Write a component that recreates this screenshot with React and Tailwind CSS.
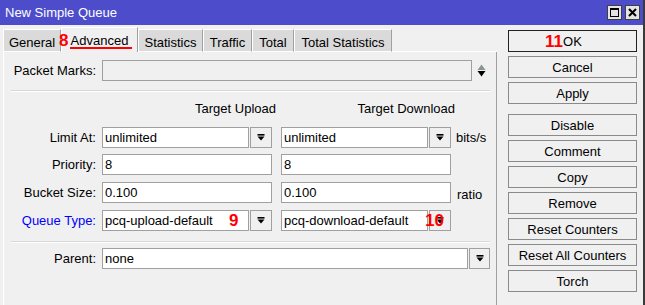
import React from 'react'

const tabs = [
  ['General', 58],
  ['Advanced', 77, true],
  ['Statistics', 65],
  ['Traffic', 49],
  ['Total', 42],
  ['Total Statistics', 98],
]

const buttons = [
  ['OK', 'mt-0'],
  ['Cancel', 'mt-[4px]'],
  ['Apply', 'mt-[4px]'],
  ['Disable', 'mt-[10px]'],
  ['Comment', 'mt-[4px]'],
  ['Copy', 'mt-[4px]'],
  ['Remove', 'mt-[4px]'],
  ['Reset Counters', 'mt-[4px]'],
  ['Reset All Counters', 'mt-[4px]'],
  ['Torch', 'mt-[4px]'],
]

function DropIcon() {
  return (
    <svg width="8" height="7" viewBox="0 0 8 7">
      <rect x="0.5" y="0" width="7" height="1.6" fill="#000" />
      <polygon points="0.5,2.6 7.5,2.6 4,6.6" fill="#000" />
    </svg>
  )
}

function DropBtn({ w = 'w-[22px]' }) {
  return (
    <div className={`${w} h-[21px] ml-px flex items-center justify-center border border-[#a0a0a0] bg-[#f0f0f0]`}>
      <DropIcon />
    </div>
  )
}

function Field({ value, w }) {
  return (
    <div className={`${w} h-[21px] border border-[#a0a0a0] bg-white px-[2px] flex items-center leading-none`}>
      {value}
    </div>
  )
}

function Label({ children, blue }) {
  return (
    <div className={`w-[92px] text-right shrink-0 leading-none ${blue ? 'text-[#0000ff]' : ''}`}>{children}</div>
  )
}

function Sep() {
  return <div className="ml-[7px] w-[479px] h-[2px] border-t border-b border-t-[#d7d7d7] border-b-white" />
}

export default function App() {
  return (
    <div className="w-[645px] h-[305px] bg-[#f0f0f0] border-r-2 border-[#3a3a3a] flex flex-col overflow-hidden text-[13px] leading-none text-black font-['Liberation_Sans',Arial,sans-serif]">
      {/* title bar */}
      <div className="h-[25px] shrink-0 bg-[#4d4dcc] flex items-center justify-between pl-[5px] pr-[3px]">
        <span className="text-white text-[13px]">New Simple Queue</span>
        <div className="flex gap-[3px]">
          <div className="w-[15px] h-[15px] bg-[#e4e4e4] border border-[#404040] flex items-center justify-center">
            <div className="w-[9px] h-[9px] border border-black border-t-2" />
          </div>
          <div className="w-[15px] h-[15px] bg-[#e4e4e4] border border-[#404040] flex items-center justify-center">
            <svg width="9" height="9" viewBox="0 0 9 9">
              <path d="M1 1 L8 8 M8 1 L1 8" stroke="#000" strokeWidth="2" />
            </svg>
          </div>
        </div>
      </div>

      <div className="flex flex-1">
        {/* left: tabs + panel */}
        <div className="w-[497px] pl-[3px] flex flex-col">
          <div className="h-[27px] flex items-end">
            {tabs.map(([name, w, active]) => (
              <div
                key={name}
                style={{ width: w }}
                className={
                  active
                    ? 'relative h-[25px] bg-[#f0f0f0] border-l border-t border-r border-l-white border-t-white border-r-[#a0a0a0] flex justify-center pt-[6px]'
                    : 'h-[23px] bg-[#dadada] border-l border-t border-r border-b border-l-white border-t-white border-r-[#a0a0a0] border-b-white flex justify-center pt-[6px]'
                }
              >
                {active && (
                  <>
                    <span className="absolute left-[-3px] top-[4px] text-[17px] leading-none font-bold text-[#ff0000]">8</span>
                    <span className="absolute left-[8px] right-[5px] top-[19px] h-[2px] bg-[#ff0000]" />
                  </>
                )}
                <span>{name}</span>
              </div>
            ))}
            <div className="flex-1 border-b border-white" />
          </div>

          <div className="flex-1 border-l border-r border-l-white border-r-[#a0a0a0] flex flex-col">
            {/* packet marks */}
            <div className="mt-[8px] h-[21px] flex items-center">
              <Label>Packet Marks:</Label>
              <div className="ml-[6px] w-[370px] h-[21px] border border-[#a0a0a0] bg-[#f0f0f0]" />
              <svg className="ml-[5px]" width="9" height="13" viewBox="0 0 9 13">
                <polygon points="0.5,6 8.5,6 4.5,0.5" fill="#8a9494" />
                <polygon points="0.5,7 8.5,7 4.5,12.5" fill="#000" />
              </svg>
            </div>
            <div className="mt-[9px]">
              <Sep />
            </div>

            {/* headers */}
            <div className="mt-[8px] h-[16px] flex items-center">
              <div className="ml-[98px] w-[174px] text-right">Target Upload</div>
              <div className="ml-[7px] w-[172px] text-right">Target Download</div>
            </div>

            {/* limit at */}
            <div className="mt-[11px] h-[21px] flex items-center">
              <Label>Limit At:</Label>
              <div className="ml-[6px] flex">
                <Field value="unlimited" w="w-[147px]" />
                <DropBtn />
              </div>
              <div className="ml-[9px] flex">
                <Field value="unlimited" w="w-[147px]" />
                <DropBtn />
              </div>
              <span className="ml-[5px]">bits/s</span>
            </div>

            {/* priority */}
            <div className="mt-[6px] h-[21px] flex items-center">
              <Label>Priority:</Label>
              <div className="ml-[6px]">
                <Field value="8" w="w-[170px]" />
              </div>
              <div className="ml-[9px]">
                <Field value="8" w="w-[170px]" />
              </div>
            </div>

            {/* bucket size */}
            <div className="mt-[7px] h-[21px] flex items-center">
              <Label>Bucket Size:</Label>
              <div className="ml-[6px]">
                <Field value="0.100" w="w-[170px]" />
              </div>
              <div className="ml-[9px]">
                <Field value="0.100" w="w-[170px]" />
              </div>
              <span className="ml-[6px] mt-[3px]">ratio</span>
            </div>

            {/* queue type */}
            <div className="mt-[7px] h-[21px] flex items-center">
              <Label blue>Queue Type:</Label>
              <div className="ml-[6px] flex relative">
                <Field value="pcq-upload-default" w="w-[147px]" />
                <DropBtn />
                <span className="absolute left-[127px] top-[2px] text-[17px] leading-none font-bold text-[#ff0000]">9</span>
              </div>
              <div className="ml-[9px] flex relative">
                <Field value="pcq-download-default" w="w-[147px]" />
                <DropBtn />
                <span className="absolute left-[144px] top-[2px] text-[17px] leading-none font-bold text-[#ff0000]">10</span>
              </div>
            </div>

            <div className="mt-[10px]">
              <Sep />
            </div>

            {/* parent */}
            <div className="mt-[5px] h-[21px] flex items-center">
              <Label>Parent:</Label>
              <div className="ml-[6px] flex">
                <Field value="none" w="w-[366px]" />
                <DropBtn w="w-[21px]" />
              </div>
            </div>
          </div>
        </div>

        {/* right: action buttons */}
        <div className="ml-[11px] pt-[5px] flex flex-col w-[129px]">
          {buttons.map(([name, mt]) => (
            <div
              key={name}
              className={`${mt} relative h-[22px] flex items-center justify-center bg-[#f0f0f0] border ${
                name === 'OK' ? 'border-[#222]' : 'border-[#8a8a8a]'
              }`}
            >
              {name === 'OK' && (
                <span className="absolute left-[36px] top-[2px] text-[17px] leading-none font-bold text-[#ff0000]">11</span>
              )}
              <span>{name}</span>
            </div>
          ))}
        </div>
      </div>
    </div>
  )
}
